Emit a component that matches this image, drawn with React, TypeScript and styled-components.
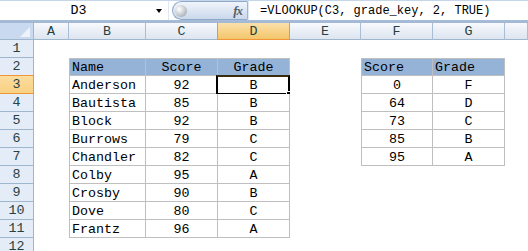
import React from "react";
import styled, { createGlobalStyle } from "styled-components";

const GlobalStyle = createGlobalStyle`
  html, body {
    margin: 0;
    padding: 0;
    background: #ffffff;
  }
  body {
    width: 528px;
    height: 251px;
    overflow: hidden;
    font-family: "Liberation Mono", "DejaVu Sans Mono", monospace;
  }
`;

const COLS = "34px 35px 77px 72px 72px 71px 72px 72px 1fr";
const LETTERS = ["A", "B", "C", "D", "E", "F", "G", ""];

type Align = "left" | "center";
type CellData = { text: string; align: Align; head?: boolean };

const grades: [string, number, string][] = [
  ["Anderson", 92, "B"],
  ["Bautista", 85, "B"],
  ["Block", 92, "B"],
  ["Burrows", 79, "C"],
  ["Chandler", 82, "C"],
  ["Colby", 95, "A"],
  ["Crosby", 90, "B"],
  ["Dove", 80, "C"],
  ["Frantz", 96, "A"],
];

const gradeKey: [number, string][] = [
  [0, "F"],
  [64, "D"],
  [73, "C"],
  [85, "B"],
  [95, "A"],
];

// sheet contents keyed by "row:col" (col 0 = A)
const cells: Record<string, CellData> = {};
cells["2:1"] = { text: "Name", align: "left", head: true };
cells["2:2"] = { text: "Score", align: "center", head: true };
cells["2:3"] = { text: "Grade", align: "center", head: true };
grades.forEach(([name, score, grade], i) => {
  cells[`${i + 3}:1`] = { text: name, align: "left" };
  cells[`${i + 3}:2`] = { text: String(score), align: "center" };
  cells[`${i + 3}:3`] = { text: grade, align: "center" };
});
cells["2:5"] = { text: "Score", align: "left", head: true };
cells["2:6"] = { text: "Grade", align: "left", head: true };
gradeKey.forEach(([score, grade], i) => {
  cells[`${i + 3}:5`] = { text: String(score), align: "center" };
  cells[`${i + 3}:6`] = { text: grade, align: "center" };
});

const Window = styled.div`
  width: 528px;
  height: 251px;
  overflow: hidden;
  display: flex;
  flex-direction: column;
  background: #ffffff;
`;

const FormulaBar = styled.div`
  display: flex;
  height: 22px;
  box-sizing: border-box;
  border-top: 1px solid #c5d5ea;
  border-bottom: 1px solid #a7bcd6;
  background: #ffffff;
`;

const NameBox = styled.div`
  width: 168px;
  display: flex;
  align-items: center;
  border-right: 1px solid #dfe7f2;
`;

const NameText = styled.div`
  flex: 1;
  text-align: center;
  font-size: 13.33px;
  color: #000;
  padding-left: 1px;
`;

const DropArrow = styled.div`
  width: 0;
  height: 0;
  border-left: 3px solid transparent;
  border-right: 3px solid transparent;
  border-top: 4px solid #000;
  margin-right: 6px;
  margin-top: 1px;
`;

const FxPill = styled.div`
  width: 76px;
  height: 19px;
  box-sizing: border-box;
  margin-left: 3px;
  display: flex;
  align-items: center;
  border: 1px solid #8ea8c9;
  border-right-color: #9fb5d1;
  border-radius: 10px 1px 1px 10px;
  background: linear-gradient(#f1f5fb, #dbe5f2 55%, #c9d8ec);
`;

const Knob = styled.div`
  width: 12px;
  height: 12px;
  margin-left: 2px;
  border-radius: 50%;
  background: radial-gradient(circle at 35% 35%, #ffffff, #c4c9cf 55%, #8e959d);
`;

const FxLabel = styled.span`
  margin-left: auto;
  margin-right: 5px;
  font-family: "Liberation Serif", serif;
  font-style: italic;
  font-weight: bold;
  font-size: 13px;
  color: #5a5f66;
  letter-spacing: -1px;
`;

const FormulaText = styled.div`
  flex: 1;
  display: flex;
  align-items: center;
  padding-left: 11px;
  font-size: 12px;
  color: #000;
  white-space: pre;
  border-left: 1px solid #dfe7f2;
`;

const Strip = styled.div`
  height: 4px;
  box-sizing: border-box;
  background: #f0f4fa;
  border-bottom: 2px solid #a3b9d5;
`;

const Row = styled.div<{ $h: number }>`
  display: grid;
  grid-template-columns: ${COLS};
  height: ${(p) => p.$h}px;
  flex: none;
`;

const Corner = styled.div`
  position: relative;
  box-sizing: border-box;
  background: #c9d9ef;
  border-right: 1px solid #9eb6ce;
  border-bottom: 1px solid #9eb6ce;
  &::after {
    content: "";
    position: absolute;
    right: 3px;
    bottom: 2px;
    width: 0;
    height: 0;
    border-left: 10px solid transparent;
    border-bottom: 10px solid #eef3fa;
  }
`;

const ColHead = styled.div<{ $active?: boolean }>`
  box-sizing: border-box;
  display: flex;
  align-items: center;
  justify-content: center;
  font-size: 13.33px;
  color: #27413e;
  background: ${(p) =>
    p.$active
      ? "linear-gradient(#fae0ad, #f7d389 50%, #f2c56a)"
      : "linear-gradient(#f7f9fc, #eaeff6 50%, #dde5ef)"};
  border-right: 1px solid ${(p) => (p.$active ? "#f29536" : "#a9bed6")};
  border-left: ${(p) => (p.$active ? "1px solid #f29536" : "none")};
  border-bottom: 1px solid ${(p) => (p.$active ? "#f29536" : "#9eb6ce")};
  margin-left: ${(p) => (p.$active ? "-1px" : "0")};
`;

const RowHead = styled.div<{ $active?: boolean }>`
  box-sizing: border-box;
  display: flex;
  align-items: center;
  justify-content: center;
  font-size: 13.33px;
  color: #27413e;
  background: ${(p) => (p.$active ? "linear-gradient(#fbdd9f, #f8d184)" : "#e4ecf7")};
  border-right: 1px solid ${(p) => (p.$active ? "#f29536" : "#9eb6ce")};
  border-bottom: 1px solid ${(p) => (p.$active ? "#f29536" : "#9eb6ce")};
  border-top: ${(p) => (p.$active ? "1px solid #f29536" : "none")};
  margin-top: ${(p) => (p.$active ? "-1px" : "0")};
`;

const Cell = styled.div<{
  $boxed?: boolean;
  $head?: boolean;
  $align?: Align;
  $edgeL?: boolean;
  $edgeT?: boolean;
}>`
  position: relative;
  box-sizing: border-box;
  display: flex;
  align-items: center;
  justify-content: ${(p) => (p.$align === "left" ? "flex-start" : "center")};
  padding: 0 2px;
  font-size: 13.33px;
  color: #000;
  white-space: pre;
  background: ${(p) => (p.$head ? "#95b3d7" : "#ffffff")};
  border-right: ${(p) => (p.$boxed ? "1px solid #bfbfbf" : "none")};
  border-bottom: ${(p) => (p.$boxed ? "1px solid #bfbfbf" : "none")};
  border-left: ${(p) => (p.$edgeL ? "1px solid #bfbfbf" : "none")};
  border-top: ${(p) => (p.$edgeT ? "1px solid #bfbfbf" : "none")};
  padding-top: 1px;
`;

const Selection = styled.div`
  position: absolute;
  left: -2px;
  top: -1px;
  width: 74px;
  height: 20px;
  box-sizing: border-box;
  border: 2px solid #000;
  border-top-color: #3a2a10;
  pointer-events: none;
`;

const FillHandle = styled.div`
  position: absolute;
  right: -4px;
  bottom: -4px;
  width: 5px;
  height: 5px;
  background: #000;
  border-left: 1px solid #fff;
  border-top: 1px solid #fff;
`;

const tableCols: Record<number, { first: number; rows: [number, number] }> = {
  1: { first: 1, rows: [2, 11] },
  2: { first: 1, rows: [2, 11] },
  3: { first: 1, rows: [2, 11] },
  5: { first: 5, rows: [2, 7] },
  6: { first: 5, rows: [2, 7] },
};

function SheetCell({ r, c }: { r: number; c: number }) {
  const data = cells[`${r}:${c}`];
  const t = tableCols[c];
  const boxed = !!t && r >= t.rows[0] && r <= t.rows[1];
  const selected = r === 3 && c === 3;
  return (
    <Cell
      $boxed={boxed}
      $head={data?.head}
      $align={data?.align}
      $edgeL={boxed && c === t.first}
      $edgeT={boxed && r === t.rows[0]}
    >
      {data?.text}
      {selected && (
        <Selection>
          <FillHandle />
        </Selection>
      )}
    </Cell>
  );
}

export default function App() {
  const rows = Array.from({ length: 12 }, (_, i) => i + 1);
  return (
    <>
      <GlobalStyle />
      <Window>
        <FormulaBar>
          <NameBox>
            <NameText>D3</NameText>
            <DropArrow />
          </NameBox>
          <FxPill>
            <Knob />
            <FxLabel>fx</FxLabel>
          </FxPill>
          <FormulaText>=VLOOKUP(C3, grade_key, 2, TRUE)</FormulaText>
        </FormulaBar>
        <Strip />
        <Row $h={17}>
          <Corner />
          {LETTERS.map((l, i) => (
            <ColHead key={i} $active={l === "D"}>
              {l}
            </ColHead>
          ))}
        </Row>
        {rows.map((r) => (
          <Row key={r} $h={18}>
            <RowHead $active={r === 3}>{r}</RowHead>
            {LETTERS.map((_, c) => (
              <SheetCell key={c} r={r} c={c} />
            ))}
          </Row>
        ))}
      </Window>
    </>
  );
}
